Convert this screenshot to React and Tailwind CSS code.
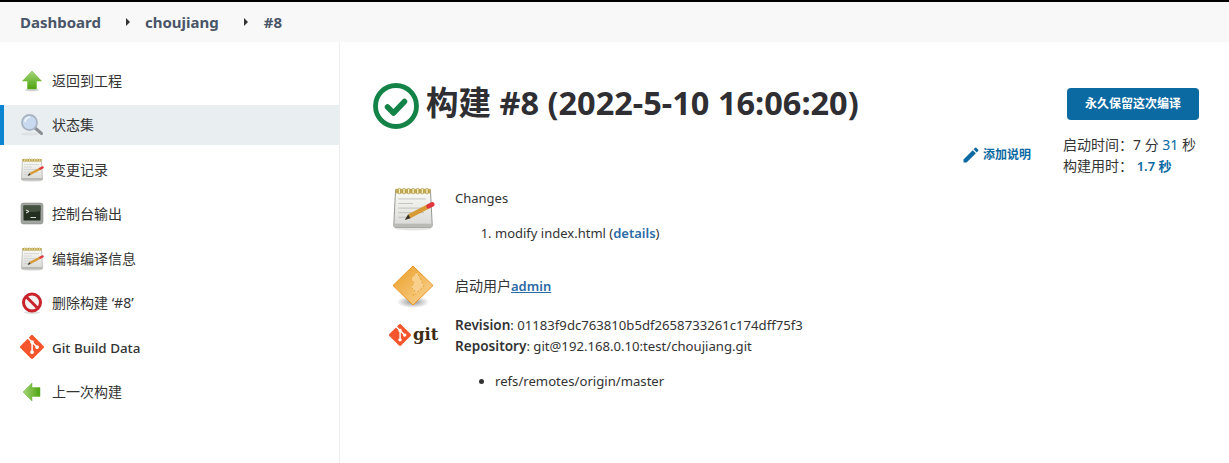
import { SiGit } from 'react-icons/si';

function UpIcon({ flip }) {
  return (
    <svg width="24" height="24" viewBox="0 0 24 24" className={flip ? '-rotate-90' : ''}>
      <defs>
        <linearGradient id={flip ? 'arrowB' : 'arrowA'} x1="0" y1="0" x2="0" y2="1">
          <stop offset="0" stopColor="#a4d77a" />
          <stop offset="1" stopColor="#4ea30e" />
        </linearGradient>
      </defs>
      {flip ? (
        <path d="M12 3 L21 12 H16.5 V20 H7.5 V12 H3 Z" fill="url(#arrowB)" stroke="#6bb52b" strokeWidth="0.5" />
      ) : (
        <>
          <ellipse cx="12" cy="21" rx="7" ry="1.5" fill="#d5d5d5" />
          <path d="M12 2 L21.5 12 H16.5 V20 H7.5 V12 H2.5 Z" fill="url(#arrowA)" stroke="#6bb52b" strokeWidth="0.5" />
        </>
      )}
    </svg>
  );
}

function SearchIcon() {
  return (
    <svg width="24" height="24" viewBox="0 0 24 24">
      <ellipse cx="10" cy="21" rx="9" ry="1.6" fill="#dfe2e4" />
      <path d="M14.5 14.5 L21.5 20.5" stroke="#8b8f94" strokeWidth="3" strokeLinecap="round" />
      <circle cx="9.5" cy="9.5" r="7.5" fill="#c9daf0" stroke="#a9b4c2" strokeWidth="1.8" />
      <path d="M5 9 a5 5 0 0 1 5 -5" stroke="#f3f8fe" strokeWidth="1.6" fill="none" />
    </svg>
  );
}

function NotepadIcon({ size = 24 }) {
  return (
    <svg width={size} height={size} viewBox="0 0 48 48">
      <defs>
        <linearGradient id={`pad${size}`} x1="0" y1="0" x2="0" y2="1">
          <stop offset="0" stopColor="#fbfbf8" />
          <stop offset="1" stopColor="#d8d8d6" />
        </linearGradient>
      </defs>
      <ellipse cx="24" cy="45" rx="20" ry="2.5" fill="#e4e4e4" />
      <path d="M5 3 H43 L45 42 Q45 44 43 44 H5 Q3 44 3 42 Z" fill={`url(#pad${size})`} stroke="#8e8e8a" strokeWidth="1" />
      <rect x="5" y="2" width="38" height="5" fill="#c7ad55" />
      <g fill="#fff4b8" stroke="#7b6a25" strokeWidth="0.5">
        <rect x="8" y="1.5" width="2.4" height="6" rx="1" />
        <rect x="13" y="1.5" width="2.4" height="6" rx="1" />
        <rect x="18" y="1.5" width="2.4" height="6" rx="1" />
        <rect x="23" y="1.5" width="2.4" height="6" rx="1" />
        <rect x="28" y="1.5" width="2.4" height="6" rx="1" />
        <rect x="33" y="1.5" width="2.4" height="6" rx="1" />
        <rect x="38" y="1.5" width="2.4" height="6" rx="1" />
      </g>
      <g stroke="#b4b4b0" strokeWidth="0.8">
        <path d="M8 13 H38" />
        <path d="M8 18 H24" />
        <path d="M8 23 H38" />
        <path d="M8 28 H36" />
        <path d="M8 33 H22" />
      </g>
      <rect x="3.5" y="40" width="41" height="4" fill="#b9b9b6" />
      <path d="M20 32 L41 21" stroke="#d79a35" strokeWidth="5" />
      <path d="M41 21 L45 19" stroke="#e0363c" strokeWidth="5" strokeLinecap="round" />
      <path d="M15 36 L18.8 29.8 L21.3 34.2 Z" fill="#3c3020" />
    </svg>
  );
}

function TerminalIcon() {
  return (
    <svg width="24" height="24" viewBox="0 0 24 24">
      <rect x="1" y="1" width="22" height="21" rx="2.5" fill="#a3a5a2" stroke="#7c7e7b" strokeWidth="0.5" />
      <rect x="3.5" y="3.5" width="17" height="15" fill="#233021" />
      <path d="M3.5 3.5 H20.5 V9 Q12 11 3.5 9 Z" fill="#44523f" />
      <path d="M6 8 L9 9.5 L6 11" stroke="#f2f2f2" strokeWidth="1" fill="none" />
      <path d="M10.5 15.5 H16" stroke="#d5d5d5" strokeWidth="1" />
    </svg>
  );
}

function NoIcon() {
  return (
    <svg width="24" height="24" viewBox="0 0 24 24">
      <ellipse cx="12" cy="21.5" rx="8" ry="1.5" fill="#dedede" />
      <circle cx="12" cy="11.5" r="8.5" fill="#f6f2f2" stroke="#c8242b" strokeWidth="3" />
      <path d="M6 5.5 L18 17.5" stroke="#c8242b" strokeWidth="3" />
    </svg>
  );
}

function GearDiamond() {
  return (
    <svg width="44" height="44" viewBox="0 0 44 44">
      <defs>
        <linearGradient id="diamondFill" x1="0" y1="0" x2="1" y2="1">
          <stop offset="0" stopColor="#e99d23" />
          <stop offset="1" stopColor="#fbd79a" />
        </linearGradient>
        <radialGradient id="diamondShadow">
          <stop offset="0" stopColor="#8f8f8f" />
          <stop offset="1" stopColor="#ffffff" />
        </radialGradient>
      </defs>
      <ellipse cx="22" cy="37" rx="16" ry="6" fill="url(#diamondShadow)" />
      <path d="M22 1 L42 20.5 L22 40 L2 20.5 Z" fill="url(#diamondFill)" stroke="#ee9420" strokeWidth="1" />
      <path d="M26 7 L20 14 L23 18 L20 22 L24 26 L22 31 L33 21 Z" fill="#f8cf8d" stroke="#e9a43c" strokeDasharray="2 2" strokeWidth="1" />
    </svg>
  );
}

function SuccessIcon() {
  return (
    <svg width="46" height="46" viewBox="0 0 46 46" className="shrink-0">
      <circle cx="23" cy="23" r="20.5" fill="none" stroke="#138347" strokeWidth="4.8" />
      <path d="M14.5 24 L20.5 30 L31.5 18.5" fill="none" stroke="#138347" strokeWidth="5.5" strokeLinecap="round" strokeLinejoin="round" />
    </svg>
  );
}

const sideItems = [
  { label: '返回到工程', icon: <UpIcon /> },
  { label: '状态集', icon: <SearchIcon />, active: true },
  { label: '变更记录', icon: <NotepadIcon /> },
  { label: '控制台输出', icon: <TerminalIcon /> },
  { label: '编辑编译信息', icon: <NotepadIcon /> },
  { label: '删除构建 ‘#8’', icon: <NoIcon /> },
  { label: 'Git Build Data', icon: <SiGit size={24} color="#f4552c" />, latin: true },
  { label: '上一次构建', icon: <UpIcon flip /> },
];

export default function App() {
  return (
    <div className="flex h-[463px] w-[1229px] flex-col overflow-hidden border-t-2 border-black bg-white font-['Noto_Sans','Noto_Sans_CJK_SC',sans-serif] text-[13px] text-[#333]">
      <div className="flex h-[40px] items-center bg-[#f8f8f8] pl-[20px] text-[15px] font-bold text-[#4a5568]">
        <span>Dashboard</span>
        <span className="ml-[25px] mr-[15px] block h-0 w-0 border-y-[4px] border-l-[4px] border-y-transparent border-l-[#333]" />
        <span>choujiang</span>
        <span className="ml-[25px] mr-[16px] block h-0 w-0 border-y-[4px] border-l-[4px] border-y-transparent border-l-[#333]" />
        <span>#8</span>
      </div>

      <div className="flex flex-1">
        <aside className="w-[340px] shrink-0 border-r border-[#eee] pt-[19px]">
          {sideItems.map((item) => (
            <div
              key={item.label}
              className={`mb-[4.4px] flex h-[40px] items-center gap-[8px] ${item.active ? 'border-l-4 border-[#0b85d1] bg-[#e9eef1] pl-[16px]' : 'pl-[20px]'} ${item.latin ? 'text-[13.4px] font-medium' : 'text-[14px]'}`}
            >
              <span className="flex h-6 w-6 shrink-0 items-center justify-center">{item.icon}</span>
              <span className={item.latin ? 'mt-px' : '-mt-px'}>{item.label}</span>
            </div>
          ))}
        </aside>

        <main className="flex-1 pl-[33px] pr-[30px]">
          <div className="mt-[41px] flex items-start justify-between">
            <div className="flex items-start gap-[7px]">
              <SuccessIcon />
              <h1 className="-mt-[3px] text-[32.5px] font-bold leading-[46px] text-[#2f2f33]">构建 #8 (2022-5-10 16:06:20)</h1>
            </div>
            <button className="mt-[5px] h-[32px] w-[132px] rounded bg-[#0b6aa2] text-[12px] font-bold text-white">永久保留这次编译</button>
          </div>

          <div className="mt-[6px] flex items-start justify-end">
            <div className="mr-[32px] mt-[10px] flex items-center gap-[2px] text-[12px] font-semibold text-[#0b6aa2]">
              <svg width="20" height="20" viewBox="0 0 24 24" fill="currentColor">
                <path d="M3 17.25V21h3.75L17.81 9.94l-3.75-3.75L3 17.25zM20.71 7.04a1 1 0 0 0 0-1.41l-2.34-2.34a1 1 0 0 0-1.41 0l-1.83 1.83 3.75 3.75 1.83-1.83z" />
              </svg>
              <span>添加说明</span>
            </div>
            <div className="-mt-px h-[43px] w-[136px] leading-[21px]">
              <div className="text-[14px]">启动时间：7 分 <span className="text-[#0b6aa2]">31</span> 秒</div>
              <div className="text-[14px]">构建用时： <span className="text-[13px] font-semibold text-[#0b6aa2]">1.7 秒</span></div>
            </div>
          </div>

          <div className="mt-[10px] pl-[18px]">
            <div className="flex gap-[20px]">
              <NotepadIcon size={44} />
              <div className="pt-[1px]">
                <p className="leading-[20px]">Changes</p>
                <ol className="ml-[40px] mt-[15px] list-decimal leading-[20px]">
                  <li>modify index.html (<span className="font-semibold text-[#2b6aa5]">details</span>)</li>
                </ol>
              </div>
            </div>

            <div className="mt-[22px] flex items-center gap-[20px]">
              <GearDiamond />
              <p className="pb-[2px]"><span className="text-[14px]">启动用户</span><span className="font-semibold text-[#2b6aa5] underline">admin</span></p>
            </div>

            <div className="mt-[5px] flex items-start gap-[16px]">
              <div className="ml-[-2px] mt-[10px] flex w-[50px] shrink-0 items-center gap-[2px]">
                <SiGit size={22} color="#f4552c" className="shrink-0" />
                <span className="font-['DejaVu_Serif',serif] text-[16.5px] font-bold leading-[20px] text-[#3d2b14]">git</span>
              </div>
              <div className="text-[13.15px] leading-[21px]">
                <p className="h-[21px]"><b className="text-[13.6px] font-semibold">Revision</b>: 01183f9dc763810b5df2658733261c174dff75f3</p>
                <p className="h-[21px]"><b className="text-[13.6px] font-semibold">Repository</b>: git@192.168.0.10:test/choujiang.git</p>
                <ul className="ml-[40px] mt-[15px] list-disc">
                  <li>refs/remotes/origin/master</li>
                </ul>
              </div>
            </div>
          </div>
        </main>
      </div>
    </div>
  );
}
